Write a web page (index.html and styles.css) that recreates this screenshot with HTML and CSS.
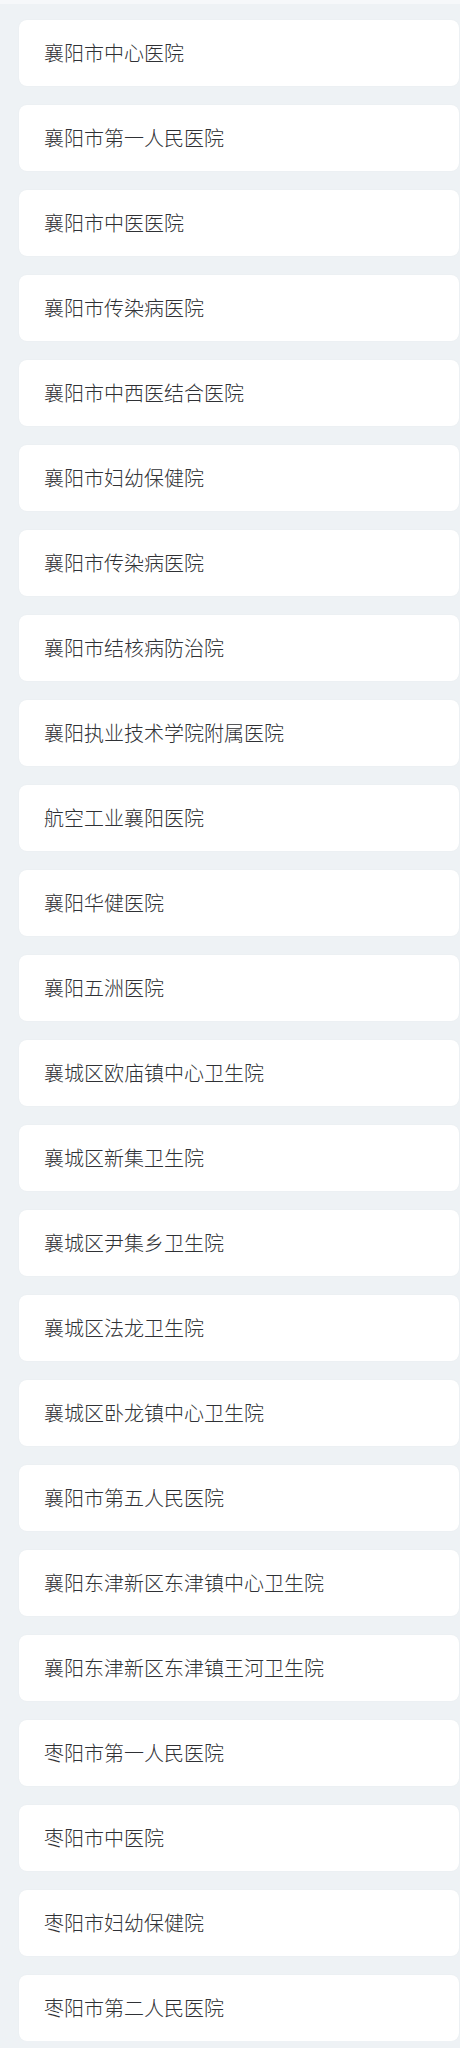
FILE: index.html
```html
<!DOCTYPE html>
<html lang="zh-CN">
<head>
<meta charset="utf-8">
<link rel="stylesheet" href="styles.css">
</head>
<body>
<div class="topbar"></div>
<ul class="list">
  <li class="item">襄阳市中心医院</li>
  <li class="item">襄阳市第一人民医院</li>
  <li class="item">襄阳市中医医院</li>
  <li class="item">襄阳市传染病医院</li>
  <li class="item">襄阳市中西医结合医院</li>
  <li class="item">襄阳市妇幼保健院</li>
  <li class="item">襄阳市传染病医院</li>
  <li class="item">襄阳市结核病防治院</li>
  <li class="item">襄阳执业技术学院附属医院</li>
  <li class="item">航空工业襄阳医院</li>
  <li class="item">襄阳华健医院</li>
  <li class="item">襄阳五洲医院</li>
  <li class="item">襄城区欧庙镇中心卫生院</li>
  <li class="item">襄城区新集卫生院</li>
  <li class="item">襄城区尹集乡卫生院</li>
  <li class="item">襄城区法龙卫生院</li>
  <li class="item">襄城区卧龙镇中心卫生院</li>
  <li class="item">襄阳市第五人民医院</li>
  <li class="item">襄阳东津新区东津镇中心卫生院</li>
  <li class="item">襄阳东津新区东津镇王河卫生院</li>
  <li class="item">枣阳市第一人民医院</li>
  <li class="item">枣阳市中医院</li>
  <li class="item">枣阳市妇幼保健院</li>
  <li class="item">枣阳市第二人民医院</li>
</ul>
</body>
</html>
```
FILE: styles.css
```css
html, body {
  margin: 0;
  padding: 0;
  background: #eef2f5;
}
body {
  font-family: "Noto Sans CJK SC", "Noto Sans", sans-serif;
  color: #2f3135;
}
.topbar {
  height: 4px;
  background: #f6f8fa;
}
.list {
  list-style: none;
  margin: 0;
  padding: 16px 1px 0 19px;
  display: flex;
  flex-direction: column;
  gap: 19px;
}
.item {
  height: 66px;
  box-sizing: border-box;
  background: #fff;
  border-radius: 8px;
  padding-left: 25px;
  display: flex;
  align-items: center;
  font-size: 20px;
  font-weight: 300;
  line-height: 1;
  box-shadow: 0 0 2px rgba(0, 0, 0, 0.04);
}
```
